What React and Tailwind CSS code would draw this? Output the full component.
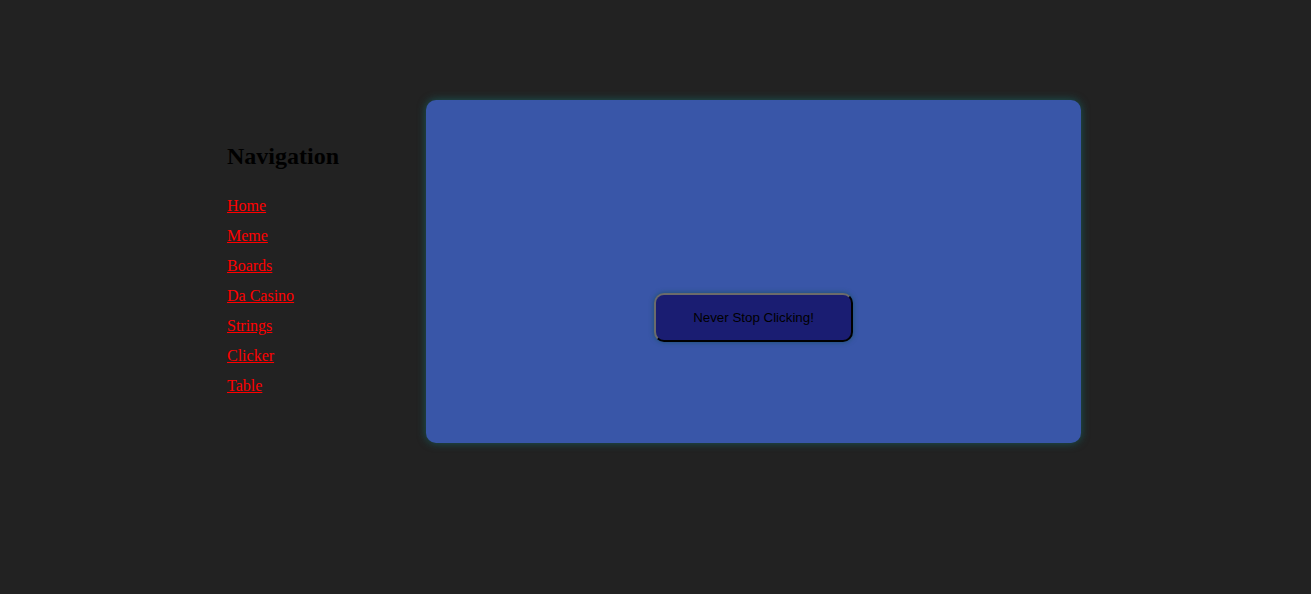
import { useState } from "react";

const links = ["Home", "Meme", "Boards", "Da Casino", "Strings", "Clicker", "Table"];

export default function App() {
  const [clicks, setClicks] = useState(0);

  return (
    <div className="min-h-screen w-full bg-[#222222] flex justify-center pt-[100px] pr-[3px] font-['Liberation_Serif',serif]">
      {/* ── Sidebar ── */}
      <nav className="w-[199px] pt-[43px]">
        <h2 className="text-[24px] font-bold text-black leading-[27px]">Navigation</h2>
        <ul className="mt-[27px] flex flex-col">
          {links.map((l) => (
            <li key={l} className="h-[30px] text-[16px] leading-[18px]">
              <a href="#" className="text-[#ff0000] underline">
                {l}
              </a>
            </li>
          ))}
        </ul>
      </nav>

      {/* ── Main panel ── */}
      <main className="w-[655px] h-[343px] rounded-[10px] bg-[#3956a8] shadow-[0_0_8px_rgba(20,110,110,0.7)] flex items-center justify-center">
        <button
          onClick={() => setClicks((c) => c + 1)}
          className="mt-[92px] w-[199px] h-[49px] rounded-[10px] bg-[#1a1d72] border-2 border-t-[#6b6b6b] border-l-[#6b6b6b] border-b-black border-r-black shadow-[0_0_5px_rgba(20,80,90,0.8)] text-[13.333px] text-black font-['Liberation_Sans',Arial,sans-serif]"
          aria-label={`clicked ${clicks}`}
        >
          Never Stop Clicking!
        </button>
      </main>
    </div>
  );
}
